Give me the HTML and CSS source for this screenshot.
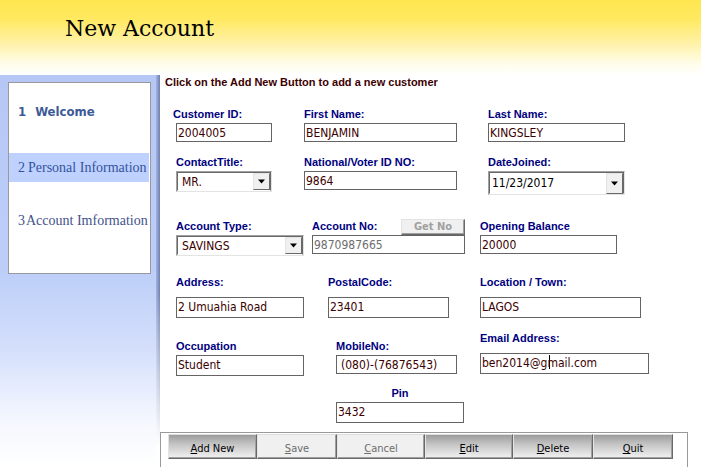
FILE: index.html
```html
<!DOCTYPE html>
<html lang="en">
<head>
    <meta charset="UTF-8">
    <meta name="viewport" content="width=device-width, initial-scale=1.0">
    <title>New Account</title>
    <link rel="stylesheet" href="styles.css">
</head>
<body>

    <header class="banner">
        <h1>New Account</h1>
    </header>

    <div class="layout">
        <aside class="sidebar">
            <ol class="steps">
                <li class="step welcome"><span>1</span><span>Welcome</span></li>
                <li class="step active"><span>2</span><span>Personal Information</span></li>
                <li class="step last"><span>3</span><span>Account Imformation</span></li>
            </ol>
        </aside>

        <main class="content">
            <p class="hint">Click on the Add New Button to add a new customer</p>

            <form id="accountForm">
                <div class="row row-name">
                    <div class="field">
                        <label class="outdent" for="customerId">Customer ID:</label>
                        <input class="small" type="text" id="customerId" value="2004005">
                    </div>
                    <div class="field">
                        <label for="firstName">First Name:</label>
                        <input class="large" type="text" id="firstName" value="BENJAMIN">
                    </div>
                    <div class="field">
                        <label for="lastName">Last Name:</label>
                        <input class="medium" type="text" id="lastName" value="KINGSLEY">
                    </div>
                </div>

                <div class="row row-name">
                    <div class="field">
                        <label for="contactTitle">ContactTitle:</label>
                        <div class="combo small">
                            <select id="contactTitle">
                                <option>MR.</option>
                                <option>MRS.</option>
                                <option>MISS</option>
                            </select>
                            <svg class="arrow" viewBox="0 0 7 4"><path d="M0 0h7L3.500 4z"/></svg>
                        </div>
                    </div>
                    <div class="field">
                        <label for="nationalId">National/Voter ID NO:</label>
                        <input class="large" type="text" id="nationalId" value="9864">
                    </div>
                    <div class="field">
                        <label for="dateJoined">DateJoined:</label>
                        <div class="combo medium date">
                            <select id="dateJoined">
                                <option>11/23/2017</option>
                            </select>
                            <svg class="arrow" viewBox="0 0 7 4"><path d="M0 0h7L3.500 4z"/></svg>
                        </div>
                    </div>
                </div>

                <div class="row row-account">
                    <div class="field">
                        <label for="accountType">Account Type:</label>
                        <div class="combo regular">
                            <select id="accountType">
                                <option>SAVINGS</option>
                                <option>CURRENT</option>
                            </select>
                            <svg class="arrow" viewBox="0 0 7 4"><path d="M0 0h7L3.500 4z"/></svg>
                        </div>
                    </div>
                    <div class="field large">
                        <div class="label-line">
                            <label for="accountNo">Account No:</label>
                            <button type="button" class="get-no" disabled>Get No</button>
                        </div>
                        <input type="text" id="accountNo" value="9870987665" disabled>
                    </div>
                    <div class="field">
                        <label for="openingBalance">Opening Balance</label>
                        <input class="medium" type="text" id="openingBalance" value="20000">
                    </div>
                </div>

                <div class="row row-address">
                    <div class="field spaced">
                        <label for="address">Address:</label>
                        <input class="regular tall" type="text" id="address" value="2 Umuahia Road">
                    </div>
                    <div class="field spaced">
                        <label for="postalCode">PostalCode:</label>
                        <input class="postal tall" type="text" id="postalCode" value="23401">
                    </div>
                    <div class="field spaced">
                        <label for="town">Location / Town:</label>
                        <input class="wide tall" type="text" id="town" value="LAGOS">
                    </div>
                </div>

                <div class="row row-contact">
                    <div class="field lowered">
                        <label for="occupation">Occupation</label>
                        <input class="regular tall" type="text" id="occupation" value="Student">
                    </div>
                    <div class="field lowered">
                        <label for="mobileNo">MobileNo:</label>
                        <input class="postal mobile" type="text" id="mobileNo" value="(080)-(76876543)">
                    </div>
                    <div class="field spaced">
                        <label for="email">Email Address:</label>
                        <div class="editing">
                            <input class="email tall" type="text" id="email" value="ben2014@gmail.com">
                            <span class="caret"></span>
                        </div>
                    </div>
                </div>

                <div class="row row-pin">
                    <div class="field pin">
                        <label for="pin">Pin</label>
                        <input class="regular tall" type="text" id="pin" value="3432">
                    </div>
                </div>
            </form>

            <div class="toolbar">
                <button type="button"><u>A</u>dd New</button>
                <button type="button" disabled><u>S</u>ave</button>
                <button type="button" disabled><u>C</u>ancel</button>
                <button type="button"><u>E</u>dit</button>
                <button type="button"><u>D</u>elete</button>
                <button type="button"><u>Q</u>uit</button>
            </div>
        </main>
    </div>

</body>
</html>
```

FILE: styles.css
```css
* {
    box-sizing: border-box;
}

body {
    margin: 0;
    min-height: 100vh;
    display: flex;
    flex-direction: column;
    background-color: white;
    font-family: "DejaVu Sans Condensed", Tahoma, sans-serif;
    font-size: 12px;
    color: #3c0000;
}

.banner {
    height: 75px;
    padding: 14px 65px 0;
    background: linear-gradient(#ffe650, #ffe960 25%, #fff2a8 58%, #fffde8 84%, white);
}

h1 {
    margin: 0;
    font-family: "DejaVu Serif", Rockwell, serif;
    font-size: 22px;
    font-weight: normal;
    line-height: 30px;
    color: black;
}

.layout {
    flex: 1;
    display: grid;
    grid-template-columns: 160px 1fr;
}

/* Sidebar */
.sidebar {
    padding: 7px 9px 0 8px;
    background:
        linear-gradient(transparent 55%, white 95%) right / 4px 100% no-repeat,
        linear-gradient(to right, #a4b4e0, #6f7fae) right / 4px 100% no-repeat,
        linear-gradient(#b6c7f6, #bccef8 50%, #d4dffb 70%, #f4f7fe 88%, white);
}

.steps {
    list-style: none;
    margin: 0;
    padding: 14px 1px 38px 0;
    border: 1px solid #999;
    background-color: white;
}

.step {
    display: flex;
    gap: 3px;
    padding-left: 9px;
    margin-bottom: 24px;
    font-family: "Liberation Serif", serif;
    font-size: 14px;
    line-height: 29px;
    white-space: nowrap;
    color: #43528a;
}

.welcome {
    gap: 9px;
    margin-bottom: 27px;
    font-family: "DejaVu Sans Condensed", Tahoma, sans-serif;
    font-size: 13px;
    font-weight: bold;
    color: #3d5a96;
}

.active {
    background-color: #bfd2ff;
    color: #34529c;
}

.last {
    gap: 1px;
    margin-bottom: 0;
}

/* Form */
.content {
    display: flex;
    flex-direction: column;
}

.hint {
    margin: 0 0 18px 5px;
    font-family: "Liberation Sans", Arial, sans-serif;
    font-size: 11px;
    font-weight: bold;
    line-height: 14px;
}

form {
    padding-left: 16px;
}

.row {
    display: grid;
    margin-bottom: 13px;
}

.row-name {
    grid-template-columns: 128px 184px 1fr;
}

.row-name + .row-name {
    margin-bottom: 24px;
}

.row-account {
    grid-template-columns: 136px 168px 1fr;
    margin-bottom: 19px;
}

.row-address {
    grid-template-columns: 152px 152px 1fr;
}

.row-contact,
.row-pin {
    grid-template-columns: 160px 144px 1fr;
    margin-bottom: 10px;
}

.row-pin {
    margin-bottom: 9px;
}

.field {
    display: flex;
    flex-direction: column;
    align-items: flex-start;
    gap: 2px;
}

.spaced {
    gap: 8px;
}

.lowered {
    padding-top: 8px;
}

.pin {
    grid-column: 2;
    width: 128px;
}

.pin label {
    align-self: center;
}

label {
    font-family: "Liberation Sans", Arial, sans-serif;
    font-size: 11px;
    font-weight: bold;
    line-height: 14px;
    white-space: nowrap;
    color: #000080;
}

.outdent {
    margin-left: -3px;
}

input {
    width: 100%;
    height: 19px;
    padding: 0 1px;
    border: 1px solid #646464;
    background-color: white;
    font: inherit;
    color: inherit;
}

input:disabled {
    color: #6d6d6d;
}

.tall {
    height: 21px;
    padding-bottom: 2px;
}

.mobile {
    padding-left: 4px;
}

.small {
    width: 96px;
}

.postal {
    width: 121px;
}

.regular {
    width: 128px;
}

.medium {
    width: 137px;
}

.large {
    width: 153px;
}

.wide {
    width: 161px;
}

.email {
    width: 169px;
}

.combo {
    position: relative;
    height: 21px;
    border: 1px solid;
    border-color: #a0a0a0 #e3e3e3 #e3e3e3 #a0a0a0;
}

.combo select {
    appearance: none;
    width: 100%;
    height: 100%;
    padding: 0 20px 0 4px;
    border: 1px solid;
    border-color: #696969 #696969 white #696969;
    border-radius: 0;
    background-color: white;
    font: inherit;
    color: inherit;
}

.arrow {
    position: absolute;
    top: 1px;
    right: 1px;
    width: 17px;
    height: 17px;
    padding: 5px 4px;
    border: 1px solid;
    border-color: #e3e3e3 #696969 #696969 #e3e3e3;
    background-color: #f0f0f0;
    pointer-events: none;
}

.date {
    height: 24px;
    color: black;
}

.date select {
    padding-left: 2px;
}

.date .arrow {
    height: 21px;
}

.label-line {
    display: flex;
    justify-content: space-between;
    width: 100%;
    height: 14px;
}

.get-no {
    width: 64px;
    height: 16px;
    padding: 0;
    border: 1px solid;
    border-color: #e3e3e3 #696969 #696969 #e3e3e3;
    box-shadow: inset -1px -1px #a0a0a0;
    background-color: #f0f0f0;
    font-family: inherit;
    font-size: 11px;
    font-weight: bold;
    line-height: 14px;
    color: #a0a0a0;
}

.editing {
    position: relative;
}

.caret {
    position: absolute;
    left: 69px;
    top: 2px;
    width: 1px;
    height: 14px;
    background-color: black;
}

/* Toolbar */
.toolbar {
    flex: 1;
    display: grid;
    grid-template-columns: 89fr 80fr 88fr 88fr 80fr 80fr;
    align-items: start;
    margin-right: 13px;
    padding: 1px 14px 0 7px;
    border: 1px solid #999;
    border-bottom: none;
}

.toolbar button {
    height: 25px;
    padding: 4px 0 0;
    border: 1px solid;
    border-color: #ddd #696969 #696969 #e3e3e3;
    box-shadow: inset -1px -1px #a0a0a0;
    background: linear-gradient(#9c9c9c, #c4c4c4 40%, #f2f2f2);
    font-family: inherit;
    font-size: 11px;
    color: black;
}

.toolbar button:disabled {
    background: #f0f0f0;
    color: #6d6d6d;
}

.toolbar u {
    text-underline-offset: 1px;
}
```
